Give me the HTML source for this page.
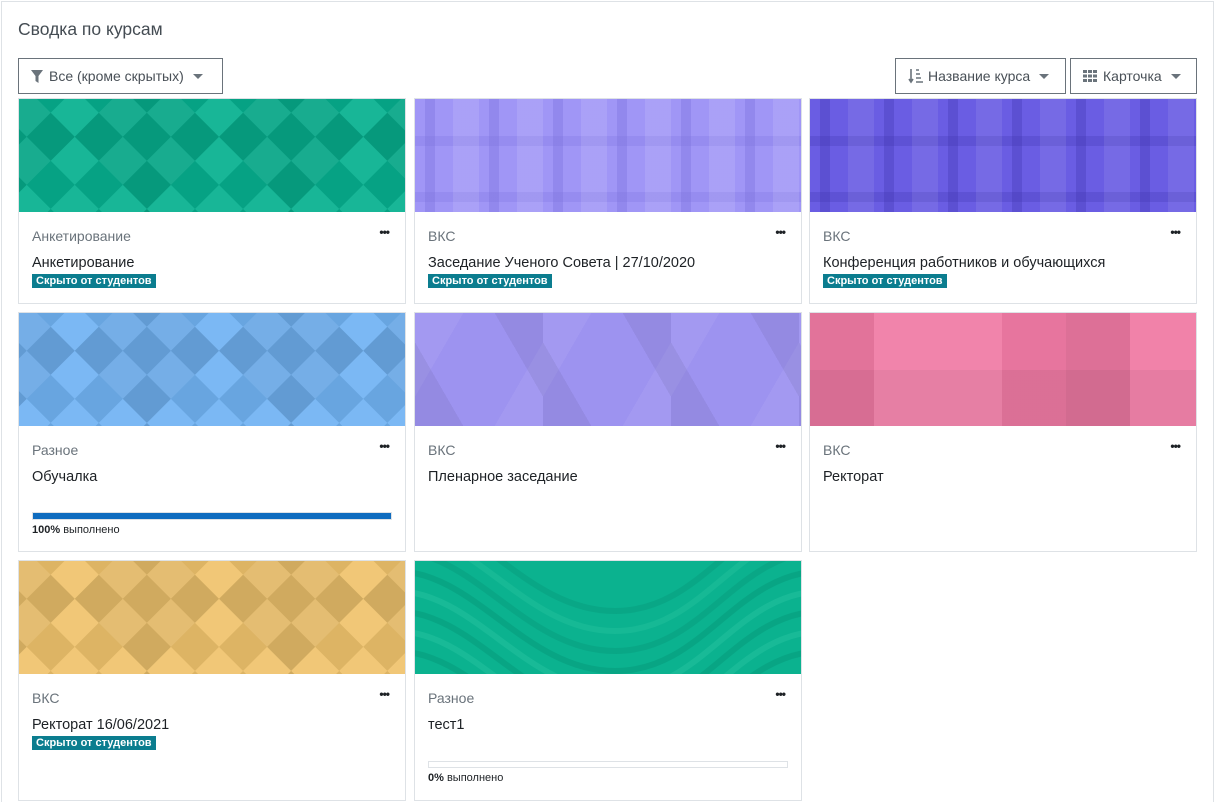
<!DOCTYPE html>
<html><head><meta charset="utf-8"><style>
*{box-sizing:border-box;margin:0;padding:0}
html{width:1217px;height:802px;overflow:hidden}
body{width:1217px;height:802px;background:#fff;font-family:"Liberation Sans","DejaVu Sans",sans-serif;position:relative;overflow:hidden;color:#1d2125}
.frame{position:absolute;left:1px;top:1px;width:1213px;height:801px;border:1px solid #dee2e6;border-bottom:none}
h2{position:absolute;left:18px;top:19px;font-size:17.5px;font-weight:normal;color:#444c53}
.btn{position:absolute;top:58px;height:36px;border:1px solid #6a737b;font-size:14px;color:#495057;display:flex;align-items:center;padding:0 10px;white-space:nowrap}
.caret{display:inline-block;border-left:5px solid transparent;border-right:5px solid transparent;border-top:5px solid #6a737b;margin-left:9px}
.card{position:absolute;border:1px solid #dee2e6;background:#fff;width:388px}
.img{height:113px;position:relative;overflow:hidden}
.cat{position:absolute;left:13px;top:129px;font-size:14px;color:#6a737b}
.nm{position:absolute;left:13px;top:156px;font-size:14.5px;color:#1d2125}
.dots{position:absolute;right:16px;top:126px;font-size:12px;font-weight:bold;letter-spacing:-1px}
.badge{position:absolute;left:13px;top:175px;background:#0b7d8f;color:#fff;font-size:11px;font-weight:bold;padding:1px 4px}
.pb{position:absolute;left:13px;top:199px;width:360px;height:8px;border:1px solid #dee2e6;background:#fff}
.pt{position:absolute;left:13px;top:211px;font-size:11px}
.dia::before{content:"";position:absolute;left:-150px;top:-250px;width:700px;height:700px;transform:rotate(45deg);background-image:repeating-conic-gradient(rgba(0,0,0,.08) 0 25%,rgba(255,255,255,.07) 0 50%),repeating-conic-gradient(rgba(0,0,0,.06) 0 25%,transparent 0 50%);background-size:68px 68px,204px 204px}
</style></head><body>
<div class="frame"></div>
<h2>Сводка по курсам</h2>
<div class="btn" style="left:18px;width:205px;padding-left:12px"><svg width="12" height="13" viewBox="0 0 12 13" style="margin-right:6px"><path d="M0 0H12L7.5 6V13L4.5 11V6Z" fill="#6a737b"/></svg>Все (кроме скрытых)<span class="caret"></span></div>
<div class="btn" style="left:895px;width:171px;padding-left:12px"><svg width="16" height="16" viewBox="0 0 16 16" style="margin-right:4px"><path d="M3 1V14M1 11L3 14L5 11" stroke="#6a737b" stroke-width="1.6" fill="none"/><path d="M8 2h3M8 6h4M8 10h5M8 14h7" stroke="#6a737b" stroke-width="1.6"/></svg>Название курса<span class="caret"></span></div>
<div class="btn" style="left:1070px;width:127px;padding-left:12px"><svg width="15" height="12" viewBox="0 0 15 12" style="margin-right:5px"><g fill="#6a737b"><rect x="0" y="0" width="4" height="3"/><rect x="5" y="0" width="4" height="3"/><rect x="10" y="0" width="4" height="3"/><rect x="0" y="4.5" width="4" height="3"/><rect x="5" y="4.5" width="4" height="3"/><rect x="10" y="4.5" width="4" height="3"/><rect x="0" y="9" width="4" height="3"/><rect x="5" y="9" width="4" height="3"/><rect x="10" y="9" width="4" height="3"/></g></svg>Карточка<span class="caret"></span></div>

<div class="card" style="left:18px;top:98px;height:206px"><div class="img dia" style="background-color:#06b08f"></div><div class="cat">Анкетирование</div><div class="dots">•••</div><div class="nm">Анкетирование</div><div class="badge">Скрыто от студентов</div></div>

<div class="card" style="left:414px;top:98px;height:206px"><div class="img" style="background-color:#a096f6;background-image:repeating-linear-gradient(90deg,transparent 0 10px,rgba(120,110,220,.35) 10px 20px,transparent 20px 38px,rgba(255,255,255,.1) 38px 64px),repeating-linear-gradient(0deg,transparent 0 10px,rgba(120,110,220,.25) 10px 20px,transparent 20px 56px)"></div><div class="cat">ВКС</div><div class="dots">•••</div><div class="nm">Заседание Ученого Совета | 27/10/2020</div><div class="badge">Скрыто от студентов</div></div>

<div class="card" style="left:809px;top:98px;height:206px"><div class="img" style="background-color:#6a5de3;background-image:repeating-linear-gradient(90deg,transparent 0 10px,rgba(60,50,170,.3) 10px 20px,transparent 20px 38px,rgba(255,255,255,.08) 38px 64px),repeating-linear-gradient(0deg,transparent 0 10px,rgba(60,50,170,.25) 10px 20px,transparent 20px 56px)"></div><div class="cat">ВКС</div><div class="dots">•••</div><div class="nm">Конференция работников и обучающихся</div><div class="badge">Скрыто от студентов</div></div>

<div class="card" style="left:18px;top:312px;height:240px"><div class="img dia" style="background-color:#71b3f3"></div><div class="cat">Разное</div><div class="dots">•••</div><div class="nm">Обучалка</div><div class="pb" style="background:#0f6cbf;border-color:#dee2e6"></div><div class="pt"><b>100%</b> выполнено</div></div>

<div class="card" style="left:414px;top:312px;height:240px"><div class="img" style="background-color:#9d93f0;background-image:linear-gradient(60deg,rgba(0,0,0,.06) 25%,transparent 25%,transparent 75%,rgba(0,0,0,.06) 75%),linear-gradient(-60deg,rgba(255,255,255,.06) 25%,transparent 25%,transparent 75%,rgba(255,255,255,.06) 75%);background-size:128px 113px"></div><div class="cat">ВКС</div><div class="dots">•••</div><div class="nm">Пленарное заседание</div></div>

<div class="card" style="left:809px;top:312px;height:240px"><div class="img" style="background-color:#f07aa4;background-image:linear-gradient(90deg,rgba(0,0,0,.06) 0 64px,rgba(255,255,255,.08) 64px 192px,rgba(0,0,0,.04) 192px 256px,rgba(0,0,0,.08) 256px 320px,rgba(255,255,255,.06) 320px),linear-gradient(0deg,rgba(0,0,0,.05) 0 56px,transparent 56px)"></div><div class="cat">ВКС</div><div class="dots">•••</div><div class="nm">Ректорат</div></div>

<div class="card" style="left:18px;top:560px;height:241px"><div class="img dia" style="background-color:#f0c36d"></div><div class="cat">ВКС</div><div class="dots">•••</div><div class="nm">Ректорат 16/06/2021</div><div class="badge">Скрыто от студентов</div></div>

<div class="card" style="left:414px;top:560px;height:241px"><div class="img" style="background-color:#0bb28f"><svg width="388" height="113" style="position:absolute;left:0;top:0"><g fill="none" stroke-width="6"><path d="M-20 10C60 10 110 110 200 110S320 10 410 10" stroke="#079c7d" opacity=".6"/><path d="M-20 30C60 30 110 130 200 130S320 30 410 30" stroke="#22bf9c" opacity=".6"/><path d="M-20 -10C60 -10 110 90 200 90S320 -10 410 -10" stroke="#079c7d" opacity=".5"/><path d="M-20 50C60 50 110 150 200 150S320 50 410 50" stroke="#079c7d" opacity=".6"/><path d="M-20 70C60 70 110 170 200 170S320 70 410 70" stroke="#22bf9c" opacity=".6"/><path d="M-20 -30C60 -30 110 70 200 70S320 -30 410 -30" stroke="#22bf9c" opacity=".5"/><path d="M-20 -50C60 -50 110 50 200 50S320 -50 410 -50" stroke="#079c7d" opacity=".5"/><path d="M-20 90C60 90 110 190 200 190S320 90 410 90" stroke="#079c7d" opacity=".6"/></g></svg></div><div class="cat">Разное</div><div class="dots">•••</div><div class="nm">тест1</div><div class="pb" style="top:200px;height:7px"></div><div class="pt"><b>0%</b> выполнено</div></div>
</body></html>
